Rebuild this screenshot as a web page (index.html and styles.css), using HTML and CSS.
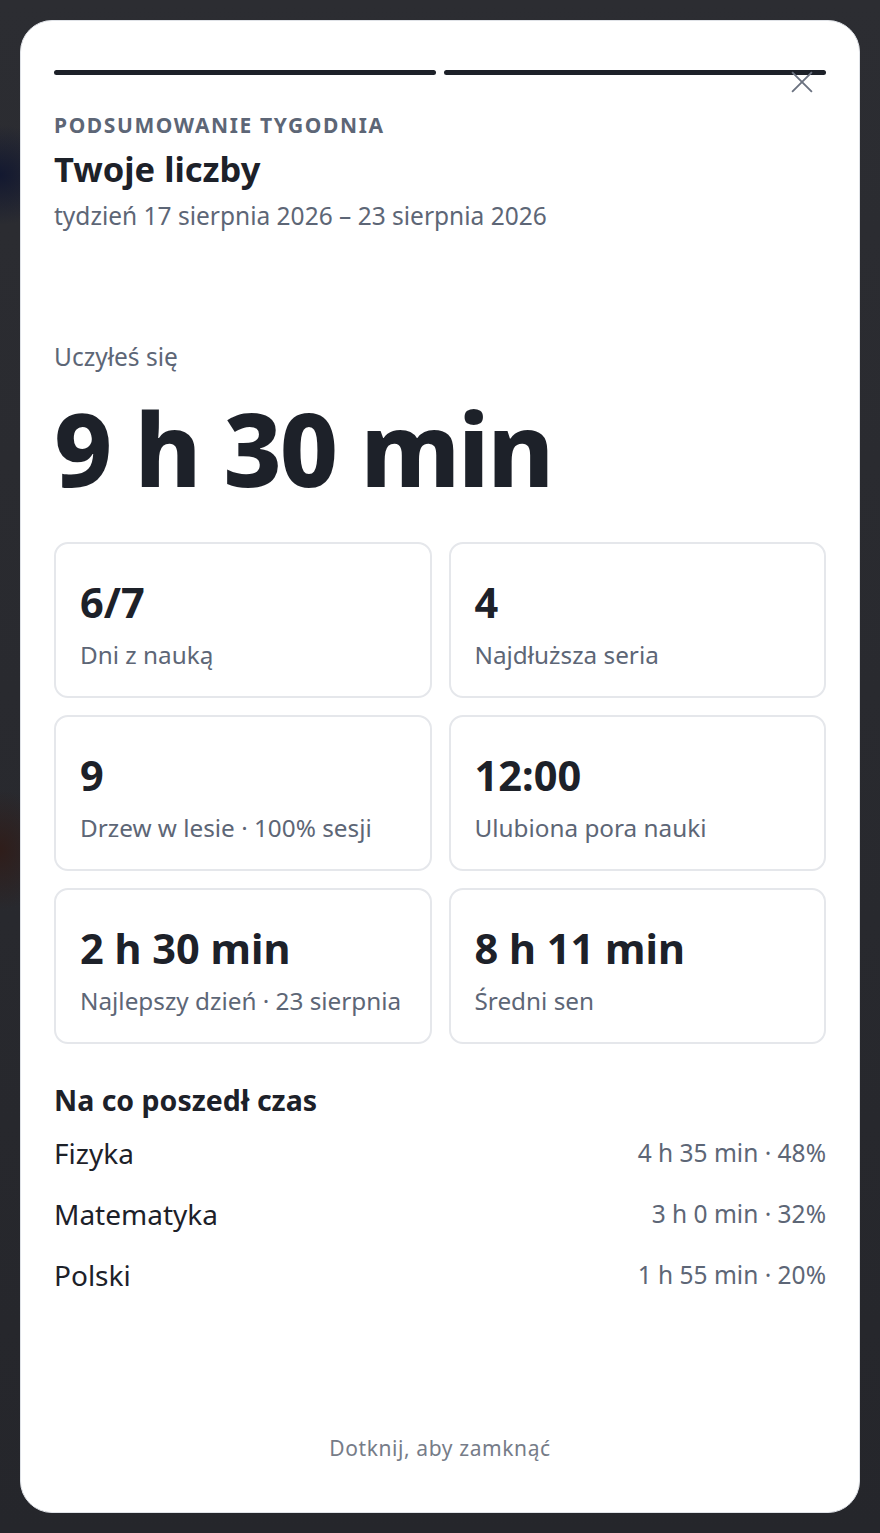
FILE: index.html
```html
<!DOCTYPE html>
<html lang="pl">
<head>
  <meta charset="UTF-8">
  <meta name="viewport" content="width=device-width, initial-scale=1.0">
  <title>Podsumowanie tygodnia</title>
  <link rel="stylesheet" href="styles.css">
</head>
<body>
  <div class="backdrop">
    <div class="sheet">
      <div class="progress">
        <span class="seg"></span>
        <span class="seg"></span>
      </div>
      <button class="close" aria-label="Zamknij">
        <svg viewBox="0 0 20 20" width="22" height="22">
          <path d="M1 1 L19 19 M19 1 L1 19" stroke="currentColor" stroke-width="1.7" fill="none"/>
        </svg>
      </button>

      <div class="eyebrow">PODSUMOWANIE TYGODNIA</div>
      <h1 class="title">Twoje liczby</h1>
      <div class="range">tydzień 17 sierpnia 2026 – 23 sierpnia 2026</div>

      <div class="lead">Uczyłeś się</div>
      <div class="hero">9 h 30 min</div>

      <div class="stats">
        <div class="stat">
          <div class="stat-value">6/7</div>
          <div class="stat-label">Dni z nauką</div>
        </div>
        <div class="stat">
          <div class="stat-value">4</div>
          <div class="stat-label">Najdłuższa seria</div>
        </div>
        <div class="stat">
          <div class="stat-value">9</div>
          <div class="stat-label">Drzew w lesie · 100% sesji</div>
        </div>
        <div class="stat">
          <div class="stat-value">12:00</div>
          <div class="stat-label">Ulubiona pora nauki</div>
        </div>
        <div class="stat">
          <div class="stat-value">2 h 30 min</div>
          <div class="stat-label">Najlepszy dzień · 23 sierpnia</div>
        </div>
        <div class="stat">
          <div class="stat-value">8 h 11 min</div>
          <div class="stat-label">Średni sen</div>
        </div>
      </div>

      <h2 class="section">Na co poszedł czas</h2>
      <ul class="subjects">
        <li><span class="name">Fizyka</span><span class="time">4 h 35 min · 48%</span></li>
        <li><span class="name">Matematyka</span><span class="time">3 h 0 min · 32%</span></li>
        <li><span class="name">Polski</span><span class="time">1 h 55 min · 20%</span></li>
      </ul>

      <div class="hint">Dotknij, aby zamknąć</div>
    </div>
  </div>
</body>
</html>
```

FILE: styles.css
```css
* {
  box-sizing: border-box;
}
body {
  margin: 0;
  font-family: "Noto Sans", "Open Sans", sans-serif;
  background: #2a2b30;
  color: #1d2129;
}
.backdrop {
  min-height: 1533px;
  padding: 20px;
  background:
    radial-gradient(ellipse 60px 50px at 0 175px, rgba(16, 22, 48, 0.9), transparent),
    radial-gradient(ellipse 50px 60px at 0 850px, rgba(48, 28, 24, 0.9), transparent),
    linear-gradient(180deg, #2c2d32 0%, #28292e 60%, #25262b 100%);
}
.sheet {
  position: relative;
  width: 840px;
  height: 1493px;
  background: #fff;
  border: 1px solid #dfe2e7;
  border-radius: 32px;
  padding: 49px 33px 0;
  display: flex;
  flex-direction: column;
}
.progress {
  display: flex;
  gap: 8px;
}
.seg {
  flex: 1;
  height: 5px;
  border-radius: 3px;
  background: #1d2129;
}
.close {
  position: absolute;
  left: 770px;
  top: 50px;
  width: 22px;
  height: 22px;
  padding: 0;
  border: none;
  background: none;
  color: #6b7280;
}
.eyebrow {
  margin-top: 36px;
  font-size: 21px;
  line-height: 28px;
  font-weight: 700;
  letter-spacing: 1.6px;
  color: #5d6676;
}
.title {
  margin: 8px 0 0;
  font-size: 34.5px;
  line-height: 44px;
  font-weight: 700;
}
.range {
  margin-top: 9px;
  font-size: 24.5px;
  line-height: 32px;
  color: #5d6676;
}
.lead {
  margin-top: 109px;
  font-size: 24.5px;
  line-height: 32px;
  color: #5d6676;
}
.hero {
  margin-top: 15px;
  font-size: 101px;
  line-height: 120px;
  font-weight: 800;
  letter-spacing: -2px;
}
.stats {
  margin-top: 34px;
  display: grid;
  grid-template-columns: 1fr 1fr;
  gap: 17px;
}
.stat {
  height: 156px;
  border: 2px solid #e5e7eb;
  border-radius: 14px;
  padding: 34px 24px 0;
}
.stat-value {
  font-size: 41.5px;
  line-height: 48px;
  font-weight: 700;
}
.stat-label {
  margin-top: 12px;
  font-size: 24.3px;
  line-height: 34px;
  color: #5d6676;
}
.section {
  margin: 38px 0 0;
  font-size: 28.5px;
  line-height: 36px;
  font-weight: 700;
}
.subjects {
  list-style: none;
  margin: 4px 0 0;
  padding: 0;
}
.subjects li {
  display: flex;
  justify-content: space-between;
  align-items: center;
  height: 61px;
}
.name {
  font-size: 28px;
}
.time {
  font-size: 24.5px;
  color: #5d6676;
}
.hint {
  margin-top: auto;
  margin-bottom: 50px;
  text-align: center;
  font-size: 21px;
  letter-spacing: 0.6px;
  color: #767c88;
}
```
